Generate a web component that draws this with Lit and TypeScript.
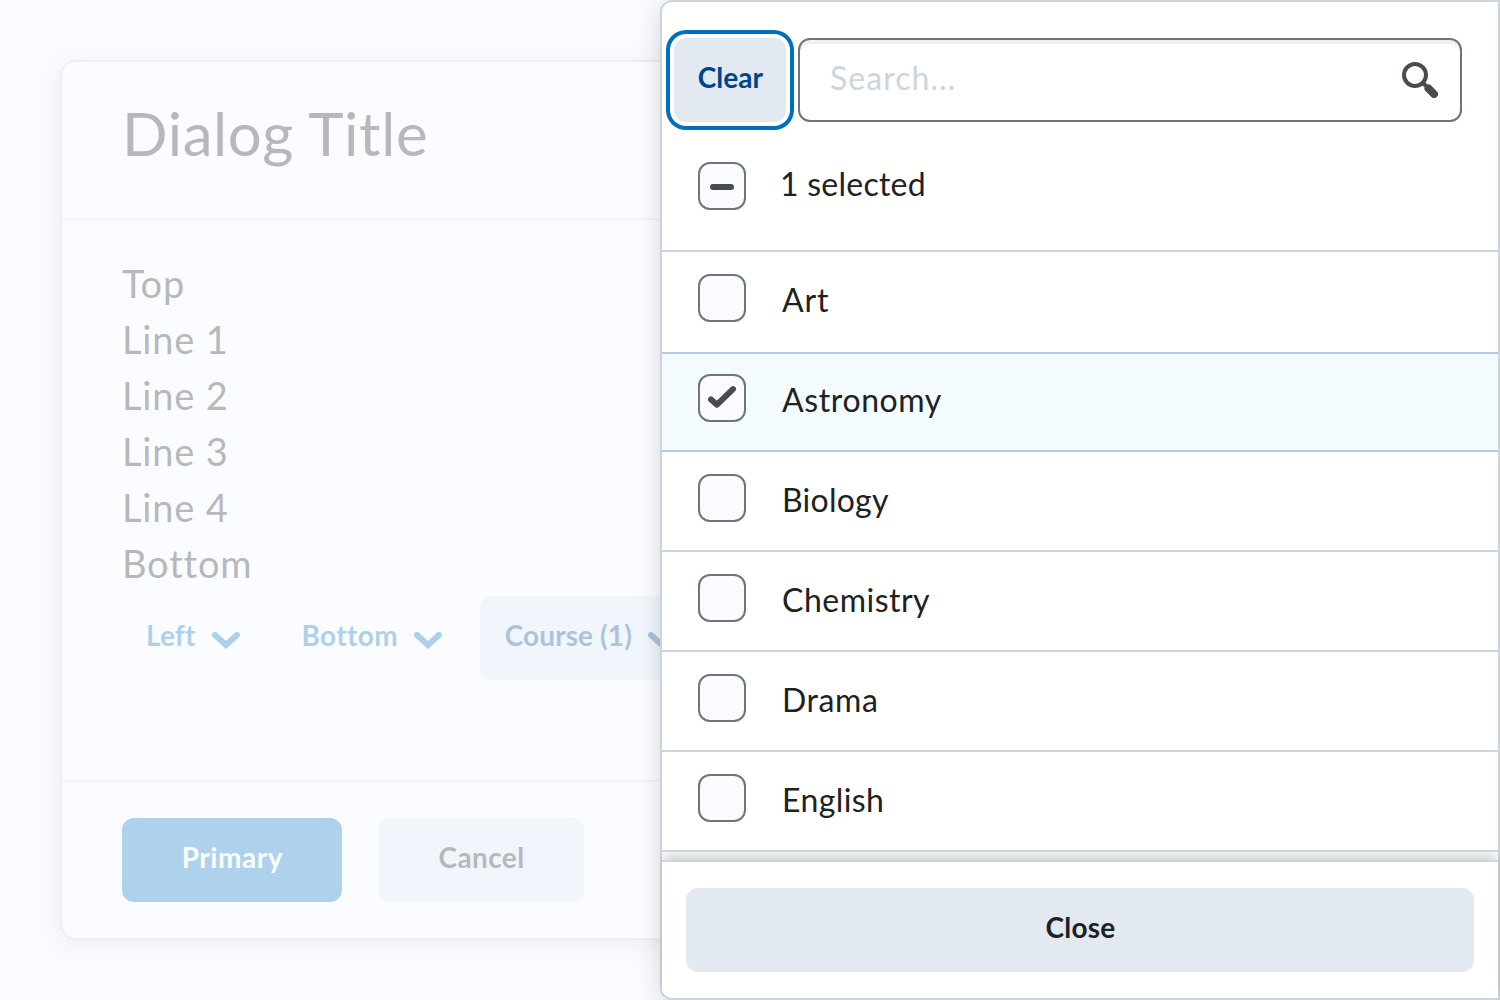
import { LitElement, html, css, svg } from "lit";
import { customElement, property } from "lit/decorators.js";

const chevron = svg`<path d="M3 3 L14 13 L25 3" fill="none" stroke="currentColor" stroke-width="6" stroke-linecap="round" stroke-linejoin="miter"/>`;

@customElement("filter-check")
class FilterCheck extends LitElement {
  @property() state = "";

  static styles = css`
    :host {
      display: block;
      box-sizing: border-box;
      flex: none;
      width: 48px;
      height: 48px;
      border: 2px solid #6e7477;
      border-radius: 12px;
      background: #f9fbff;
    }
    .mark {
      display: block;
      width: 44px;
      height: 44px;
      fill: none;
      stroke: #494c4e;
      stroke-width: 6;
      stroke-linecap: round;
      stroke-linejoin: round;
    }
  `;

  render() {
    if (this.state === "checked") {
      return html`<svg class="mark" viewBox="0 0 44 44"><path d="M11 23.5 L17 28.7 L33 13.2" /></svg>`;
    }
    if (this.state === "mixed") {
      return html`<svg class="mark" viewBox="0 0 44 44"><path d="M13 23 H31" /></svg>`;
    }
    return html``;
  }
}

@customElement("app-root")
class AppRoot extends LitElement {
  private lines = ["Top", "Line 1", "Line 2", "Line 3", "Line 4", "Bottom"];
  private courses = [
    { name: "Art", fit: "loosest" },
    { name: "Astronomy", fit: "loose" },
    { name: "Biology", fit: "tight" },
    { name: "Chemistry", fit: "" },
    { name: "Drama", fit: "loose" },
    { name: "English", fit: "even" },
  ];
  private selected = "Astronomy";

  static styles = css`
    :host {
      display: block;
      position: relative;
      width: 1500px;
      height: 1000px;
      overflow: hidden;
      box-sizing: border-box;
      padding: 60px;
      background: #f9fbff;
      color: #202122;
      font-family: Lato, "Liberation Sans", sans-serif;
      font-size: 38px;
      line-height: 56px;
      letter-spacing: 0.4px;
    }
    * {
      box-sizing: border-box;
    }
    .dialog {
      display: flex;
      flex-direction: column;
      height: 880px;
      border: 2px solid #cdd5dc;
      border-radius: 16px;
      background: #fff;
      box-shadow: 0 4px 24px rgba(0, 0, 0, 0.15);
      opacity: 0.3;
    }
    .title {
      height: 158px;
      padding: 39px 60px 0;
      border-bottom: 2px solid #e2e9f8;
      font-size: 60px;
      line-height: 64px;
      letter-spacing: 0.6px;
    }
    .body {
      flex: 1;
      padding: 35px 60px 0;
      letter-spacing: 0.82px;
    }
    .filters {
      display: flex;
      gap: 12px;
      margin-top: 5px;
    }
    .btn {
      display: flex;
      justify-content: center;
      align-items: center;
      height: 84px;
      padding: 0 24px;
      border-radius: 12px;
      font-size: 28px;
      line-height: 36px;
      font-weight: 700;
      letter-spacing: 0.4px;
      white-space: nowrap;
    }
    .btn span {
      position: relative;
      top: -3px;
    }
    .subtle {
      padding-right: 26px;
      color: #006fbf;
      gap: 16px;
    }
    .snug {
      padding-right: 25px;
      gap: 17px;
      letter-spacing: 0.1px;
    }
    .opened {
      background: #e2e9f8;
      color: #004489;
    }
    .opened span {
      left: 0.6px;
    }
    .chev {
      width: 28px;
      height: 18px;
      margin-top: 5px;
    }
    .actions {
      display: flex;
      gap: 36px;
      height: 158px;
      padding: 36px 60px;
      border-top: 2px solid #e2e9f8;
    }
    .primary {
      width: 220px;
      background: #0673c3;
      color: #fff;
      letter-spacing: 0.55px;
    }
    .primary span {
      left: 0.4px;
    }
    .plain {
      width: 206px;
      background: #e2e9f8;
    }
    .plain span {
      left: 0.5px;
    }
    .drawer {
      position: absolute;
      left: 660px;
      top: 0;
      display: flex;
      flex-direction: column;
      width: 840px;
      height: 1000px;
      border: 2px solid #cdd5dc;
      border-radius: 12px 0 0 12px;
      background: #fff;
      box-shadow: 0 4px 24px rgba(0, 0, 0, 0.15);
      font-size: 32px;
      line-height: 48px;
    }
    .tools {
      display: flex;
      gap: 12px;
      padding: 36px 36px 0 12px;
    }
    .clear {
      width: 112px;
      background: #e3e9f1;
      color: #004489;
      letter-spacing: 0;
      box-shadow: 0 0 0 4px #fff, 0 0 0 8px #006fbf;
    }
    .clear span {
      left: 0.4px;
    }
    .search {
      flex: 1;
      display: flex;
      justify-content: space-between;
      align-items: center;
      height: 84px;
      padding: 0 22px 0 30px;
      border: 2px solid #6e7477;
      border-radius: 12px;
      box-shadow: inset 0 4px 0 #eff0f1;
      color: #cdd5dc;
      letter-spacing: 1.05px;
    }
    .search span {
      position: relative;
      top: -2px;
    }
    .glass {
      width: 36px;
      height: 36px;
    }
    .all {
      display: flex;
      gap: 34px;
      height: 128px;
      padding: 40px 36px 0;
      letter-spacing: 0.25px;
    }
    .all span {
      position: relative;
      top: -2px;
    }
    .list {
      position: relative;
      z-index: 1;
      background: #fff;
      border-bottom: 2px solid #cdd5dc;
    }
    .row {
      display: flex;
      gap: 36px;
      height: 100px;
      padding: 22px 36px 0;
      border-top: 2px solid #cdd5dc;
      letter-spacing: 0.5px;
    }
    .row span {
      position: relative;
      top: 2px;
    }
    .row:first-child {
      height: 102px;
    }
    .tight {
      letter-spacing: 0.25px;
    }
    .even {
      letter-spacing: 0.4px;
    }
    .loose {
      letter-spacing: 0.6px;
    }
    .loosest {
      letter-spacing: 0.9px;
    }
    .picked {
      height: 98px;
      padding-top: 20px;
      border-top-color: #b5cbe6;
      background: #f3fbff;
    }
    .picked + .row {
      border-top-color: #b5cbe6;
    }
    .foot {
      margin-top: 8px;
      flex: 1;
      padding: 26px 24px 0;
      border-top: 2px solid #cdd5dc;
      border-radius: 0 0 0 10px;
      background: #fff;
      box-shadow: 0 -7px 11px -1px rgba(0, 0, 0, 0.17);
      clip-path: inset(-8px -2px 0 -2px);
    }
    .close {
      background: #e3e9f1;
      letter-spacing: 0.2px;
    }
    .close span {
      left: 0.5px;
    }
  `;

  render() {
    return html`
      <section class="dialog">
        <div class="title">Dialog Title</div>
        <div class="body">
          ${this.lines.map((l) => html`<div>${l}</div>`)}
          <div class="filters">
            <div class="btn subtle snug"><span>Left</span><svg class="chev" viewBox="0 0 28 18">${chevron}</svg></div>
            <div class="btn subtle"><span>Bottom</span><svg class="chev" viewBox="0 0 28 18">${chevron}</svg></div>
            <div class="btn subtle snug opened"><span>Course (1)</span><svg class="chev" viewBox="0 0 28 18">${chevron}</svg></div>
          </div>
        </div>
        <div class="actions">
          <div class="btn primary"><span>Primary</span></div>
          <div class="btn plain"><span>Cancel</span></div>
        </div>
      </section>
      <section class="drawer">
        <div class="tools">
          <div class="btn clear"><span>Clear</span></div>
          <div class="search">
            <span>Search...</span>
            <svg class="glass" viewBox="0 0 36 36">
              <circle cx="13" cy="13" r="11" fill="none" stroke="#494c4e" stroke-width="4" />
              <path d="M20 20 L24 24" stroke="#494c4e" stroke-width="4" />
              <path d="M26.5 26.5 L32 32" stroke="#494c4e" stroke-width="8" stroke-linecap="round" />
            </svg>
          </div>
        </div>
        <div class="all"><filter-check state="mixed"></filter-check><span>1 selected</span></div>
        <div class="list">
          ${this.courses.map((c) => {
            const on = c.name === this.selected;
            return html`<div class="row ${on ? "picked" : ""}">
              <filter-check state=${on ? "checked" : ""}></filter-check><span class=${c.fit}>${c.name}</span>
            </div>`;
          })}
        </div>
        <div class="foot"><div class="btn close"><span>Close</span></div></div>
      </section>
    `;
  }
}
